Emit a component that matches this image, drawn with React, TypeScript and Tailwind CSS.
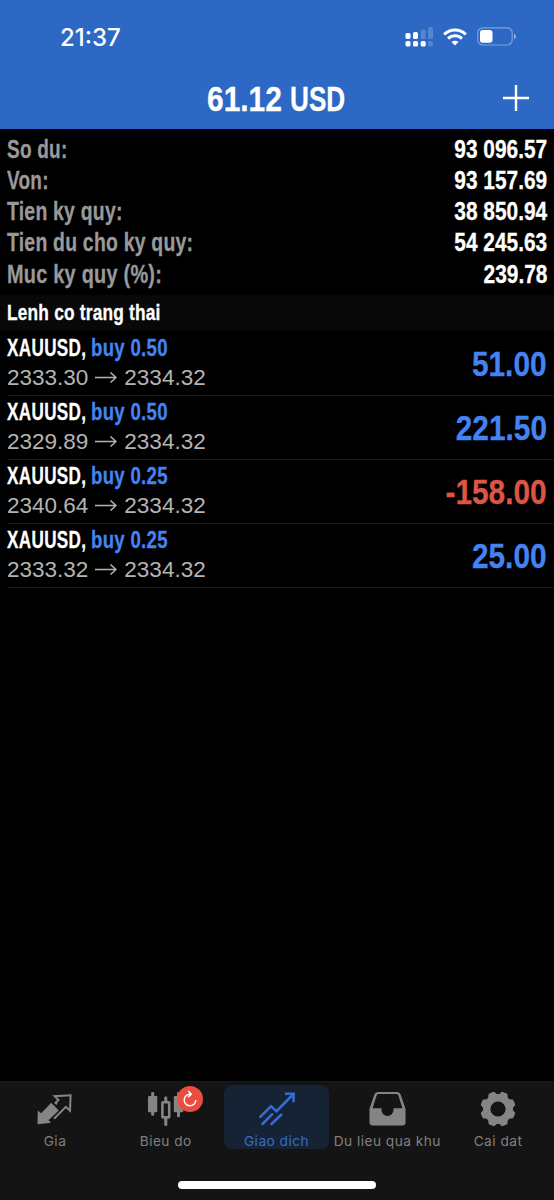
import type { ReactNode } from "react";

const BOLD = "font-['Liberation_Sans',sans-serif] font-bold whitespace-nowrap";
const HEAVY = "[-webkit-text-stroke:0.3px_currentColor]";

const summary = [
  { label: "So du:", value: "93 096.57", squeeze: "scale-x-[0.76]" },
  { label: "Von:", value: "93 157.69", squeeze: "scale-x-[0.76]" },
  { label: "Tien ky quy:", value: "38 850.94", squeeze: "scale-x-[0.776]" },
  { label: "Tien du cho ky quy:", value: "54 245.63", squeeze: "scale-x-[0.776]" },
  { label: "Muc ky quy (%):", value: "239.78", squeeze: "scale-x-[0.796]" },
];

const positions = [
  { symbol: "XAUUSD", side: "buy 0.50", open: "2333.30", current: "2334.32", profit: "51.00" },
  { symbol: "XAUUSD", side: "buy 0.50", open: "2329.89", current: "2334.32", profit: "221.50" },
  { symbol: "XAUUSD", side: "buy 0.25", open: "2340.64", current: "2334.32", profit: "-158.00" },
  { symbol: "XAUUSD", side: "buy 0.25", open: "2333.32", current: "2334.32", profit: "25.00" },
];

function SignalIcon() {
  return (
    <svg width="29" height="20" viewBox="0 0 29 20" fill="#fff">
      <rect x="0.5" y="6" width="5" height="6" rx="1.6" />
      <rect x="8" y="5" width="5" height="7" rx="1.6" />
      <rect x="15.7" y="2.5" width="5" height="9.5" rx="1.6" opacity=".2" />
      <rect x="23" y="0" width="5" height="12" rx="1.6" opacity=".2" />
      <rect x="0.5" y="14" width="5" height="5.6" rx="1.6" />
      <rect x="8" y="14" width="5" height="5.6" rx="1.6" />
      <rect x="15.7" y="14" width="5" height="5.6" rx="1.6" />
      <rect x="23" y="14" width="5" height="5.6" rx="1.8" opacity=".2" />
    </svg>
  );
}

function WifiIcon() {
  return (
    <svg width="24" height="18" viewBox="0 0 24 18" fill="none" stroke="#fff" strokeWidth="3.1">
      <path d="M1.2 6.5a15.3 15.3 0 0 1 21.6 0" />
      <path d="M5.1 10.6a9.8 9.8 0 0 1 13.8 0" />
      <path d="M12 17.6 8.5 14.1a5 5 0 0 1 7 0Z" fill="#fff" stroke="none" />
    </svg>
  );
}

function BatteryIcon() {
  return (
    <svg width="40" height="19" viewBox="0 0 40 19" fill="none">
      <rect x="0.8" y="0.8" width="34.4" height="17.2" rx="5" stroke="#8fb0e6" strokeOpacity=".8" strokeWidth="1.2" />
      <rect x="3" y="3" width="12.5" height="12.8" rx="2.8" fill="#fff" />
      <path d="M37 6.7c1.3.5 2 1.6 2 2.8s-.7 2.2-2 2.7Z" fill="#8fb0e6" />
    </svg>
  );
}

function QuotesIcon() {
  return (
    <svg width="36" height="32" viewBox="0 0 36 32">
      <path d="M.5 31.2.8 17.5 4.2 20.2 14.2 9.8 21.8 17.5 11.5 27.2 14.2 29.8Z" fill="#858585" />
      <path
        d="M20 11.2 18.5 9.8 21.5 7 17.6 3.2 33.6 2.2 33 17.8 28.9 13.9 17 25.7"
        fill="none"
        stroke="#858585"
        strokeWidth="2"
      />
    </svg>
  );
}

function ChartIcon() {
  return (
    <svg width="36" height="36" viewBox="0 0 36 36" fill="#858585">
      <rect x="3.2" y="1" width="3" height="23.8" rx="1.2" />
      <rect x="0" y="5" width="9.3" height="16.2" rx="1.2" />
      <rect x="16.3" y="5.6" width="3" height="6" rx="1.2" />
      <rect x="16.3" y="27" width="3" height="8" rx="1.2" />
      <rect x="14.4" y="11.2" width="6.8" height="15.2" rx="0.6" fill="none" stroke="#858585" strokeWidth="2.6" />
      <rect x="29" y="1" width="3" height="25.3" rx="1.2" />
      <rect x="25.8" y="5" width="9.5" height="16.2" rx="1.2" />
    </svg>
  );
}

function TradeIcon() {
  return (
    <svg width="36" height="34" viewBox="0 0 36 34" fill="none" stroke="#366bd1" strokeWidth="2.6" strokeLinecap="round">
      <path d="M1.3 24.9 12 14.3 17.5 19.2 33.5 3" strokeLinejoin="miter" />
      <path d="M26 1.7h8.6v8.6" strokeLinecap="butt" />
      <path d="M30 1.7h4.6v4.6Z" fill="#366bd1" stroke="none" />
      <path d="M3.5 32 13 22.3M12.5 32 22.2 22.7" />
    </svg>
  );
}

function InboxIcon() {
  return (
    <svg width="37" height="34" viewBox="0 0 37 34">
      <path
        fillRule="evenodd"
        fill="#858585"
        d="M9.5 0h18c2.2 0 3.6 1 4.3 3l4.7 13.8V30.5q0 3-3 3H3.5q-3 0-3-3V16.8L5.2 3C5.9 1 7.3 0 9.5 0ZM9.8 2C8.7 2 8 2.5 7.6 3.6L3.6 16.3H12.5V18a6 6 0 0 0 12 0v-1.7h8.9L29.4 3.6C29 2.5 28.3 2 27.2 2Z"
      />
    </svg>
  );
}

function GearIcon() {
  return (
    <svg width="36" height="36" viewBox="-18 -18 36 36">
      <g fill="#858585">
        <path
          fillRule="evenodd"
          d="M0-15a15 15 0 1 1 0 30a15 15 0 1 1 0-30ZM0-7.6a7.6 7.6 0 1 0 0 15.2a7.6 7.6 0 1 0 0-15.2Z"
        />
        {[22.5, 67.5, 112.5, 157.5, 202.5, 247.5, 292.5, 337.5].map((a) => (
          <path key={a} d="M-5.4-12.5-3.4-16.7Q-3-17.6-2-17.6H2Q3-17.6 3.4-16.7L5.4-12.5Z" transform={`rotate(${a})`} />
        ))}
      </g>
    </svg>
  );
}

function Tab({ label, active, children }: { label: string; active?: boolean; children: ReactNode }) {
  return (
    <div
      className={
        "flex h-16 w-[105px] flex-col items-center rounded-lg " +
        (active ? "bg-[#162334] text-[#366bd1]" : "text-[#808080]")
      }
    >
      <div className="flex h-[47px] shrink-0 items-center justify-center">{children}</div>
      <span className="whitespace-nowrap font-['Inter',sans-serif] text-[13.7px] leading-[18px] tracking-[0.47px]">
        {label}
      </span>
    </div>
  );
}

export default function App() {
  return (
    <div className="flex h-[1200px] w-[554px] flex-col overflow-hidden bg-black">
      <header className="flex h-[129px] flex-col bg-[#2d68c4] text-white">
        <div className="flex h-[70px] items-start justify-between pl-[60px] pr-[37px]">
          <span className="mt-[22px] font-['Inter',sans-serif] text-[24px] font-medium leading-8">21:37</span>
          <div className="mt-[27px] flex items-start">
            <SignalIcon />
            <div className="ml-[9px] mt-px">
              <WifiIcon />
            </div>
            <div className="ml-2.5">
              <BatteryIcon />
            </div>
          </div>
        </div>
        <div className="grid h-[59px] grid-cols-[207px_1fr_80px] items-start">
          <span />
          <h1 className={`${BOLD} ${HEAVY} mt-2 flex text-[35px] leading-[42px]`}>
            <span className="w-[82.5px] origin-left scale-x-[0.855]">61.12 </span>
            <span className="origin-left scale-x-[0.747]">USD</span>
          </h1>
          <svg className="ml-7 mt-3.5" width="28" height="28" viewBox="0 0 28 28" stroke="#fff" strokeWidth="2.4">
            <path d="M1 14h26M14 1v26" />
          </svg>
        </div>
      </header>

      <dl className={`${BOLD} ${HEAVY} flex h-[166px] flex-col px-[7px] pt-[4.5px] text-[25px] leading-[31px]`}>
        {summary.map((row) => (
          <div key={row.label} className="flex h-[31.3px] justify-between">
            <dt className={`origin-left tracking-[0.3px] text-[#999] ${row.squeeze}`}>{row.label}</dt>
            <dd className="origin-right scale-x-[0.835] text-white">{row.value}</dd>
          </div>
        ))}
      </dl>

      <div className="h-9 bg-[#080808] pl-[7px]">
        <h2 className={`${BOLD} ${HEAVY} w-max origin-left scale-x-[0.805] text-[21.5px] leading-9 tracking-[0.25px] text-white`}>
          Lenh co trang thai
        </h2>
      </div>

      <ul className="pt-px">
        {positions.map((p) => (
          <li key={p.open} className="ml-[7px] flex h-16 items-center justify-between border-b border-[#1a1a1a] pr-[7px]">
            <div className="pb-0.5">
              <div className={`${BOLD} ${HEAVY} flex text-[23px] leading-[30px]`}>
                <span className="w-[83.5px] origin-left scale-x-[0.742] tracking-[0.5px] text-white">{p.symbol},</span>
                <span className="origin-left scale-x-[0.81] tracking-[0.35px] text-[#4483f0]">{p.side}</span>
              </div>
              <div className="flex items-center font-['Liberation_Sans',sans-serif] text-[22.5px] leading-[30px] text-[#b4b4b4]">
                {p.open}
                <svg className="mx-[7px]" width="22" height="12" viewBox="0 0 22 12" fill="none" stroke="#b4b4b4" strokeWidth="1.5">
                  <path d="M0 5.500h21M15.500 .5 21 5.500l-5.500 5" />
                </svg>
                {p.current}
              </div>
            </div>
            <span
              className={`${BOLD} ${HEAVY} origin-right scale-x-[0.853] text-[35px] leading-10 ${p.profit.startsWith("-") ? "text-[#dd5544]" : "text-[#4483f0]"}`}
            >
              {p.profit}
            </span>
          </li>
        ))}
      </ul>

      <footer className="mt-auto flex h-[119px] flex-col border-t border-[#1b1b1b] bg-[#141414]">
        <nav className="flex justify-between pl-[2.5px] pr-[3.5px] pt-[3px]">
          <Tab label="Gia">
            <QuotesIcon />
          </Tab>
          <Tab label="Bieu do">
            <div className="relative">
              <ChartIcon />
              <span className="absolute -top-[5px] left-[29px] flex size-[26px] items-center justify-center rounded-full bg-[#e94e40]">
                <svg width="16" height="18" viewBox="0 0 16 18" fill="none" stroke="#fff" strokeWidth="1.4">
                  <path d="M9 4.3A5.8 5.8 0 1 0 13.8 10M6.3 1 9.3 4.3 6 7.3" />
                </svg>
              </span>
            </div>
          </Tab>
          <Tab label="Giao dich" active>
            <TradeIcon />
          </Tab>
          <Tab label="Du lieu qua khu">
            <InboxIcon />
          </Tab>
          <Tab label="Cai dat">
            <GearIcon />
          </Tab>
        </nav>
        <div className="mx-auto mt-8 h-2 w-[198px] rounded-full bg-white" />
      </footer>
    </div>
  );
}
